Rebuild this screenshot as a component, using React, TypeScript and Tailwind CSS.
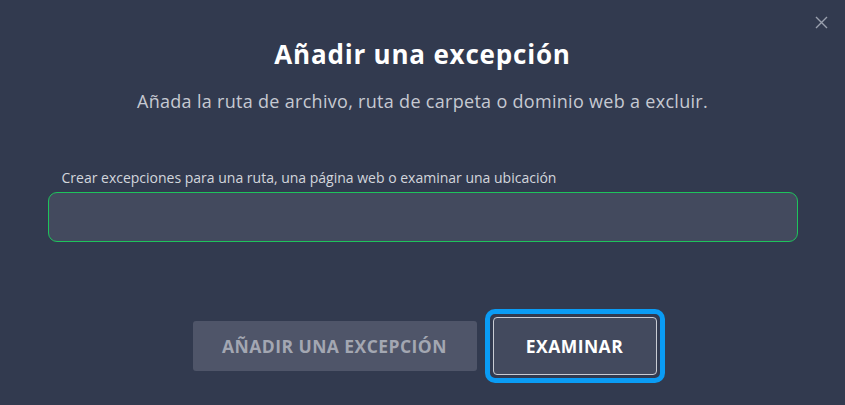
import React from 'react';

export default function App() {
  return (
    <div
      className="relative flex h-[405px] w-[845px] flex-col items-center bg-[#323a4f] text-white"
      style={{ fontFamily: '"Open Sans", Inter, sans-serif' }}
    >
      <button className="absolute right-[17px] top-[16px] text-[#9aa0ae]" aria-label="Cerrar">
        <svg width="13" height="13" viewBox="0 0 13 13" fill="none" stroke="currentColor" strokeWidth="1.4">
          <path d="M1 1L12 12M12 1L1 12" />
        </svg>
      </button>

      <h1 className="mt-[38px] text-[26px] font-bold leading-[32px] tracking-[0.8px]">Añadir una excepción</h1>
      <p className="mt-[20px] text-[18px] leading-[22px] tracking-[0.3px] text-[#c6c9d2]">
        Añada la ruta de archivo, ruta de carpeta o dominio web a excluir.
      </p>

      <div className="mt-[57px] w-[750px]">
        <label className="block pl-[14px] text-[14px] leading-[18px] text-[#d3d6dd]">
          Crear excepciones para una ruta, una página web o examinar una ubicación
        </label>
        <input
          className="mt-[5px] h-[50px] w-full rounded-[9px] border border-[#1ec35c] bg-[#434a5e] px-3 text-white outline-none"
          type="text"
        />
      </div>

      <div className="mt-[67px] flex items-center gap-[8px] pl-[12px]">
        <button
          disabled
          className="h-[50px] w-[284px] rounded-[3px] bg-[#4f5569] text-[17.5px] font-bold tracking-[0.45px] text-[#a3a7b2]"
        >
          AÑADIR UNA EXCEPCIÓN
        </button>
        <div className="rounded-[10px] border-[5px] border-[#0a9cf5] p-[3px]">
          <button className="h-[58px] w-[164px] rounded-[4px] border border-[#c9ccd3] bg-[#434a5e] text-[17.5px] font-bold tracking-[0.45px] text-white">
            EXAMINAR
          </button>
        </div>
      </div>
    </div>
  );
}
